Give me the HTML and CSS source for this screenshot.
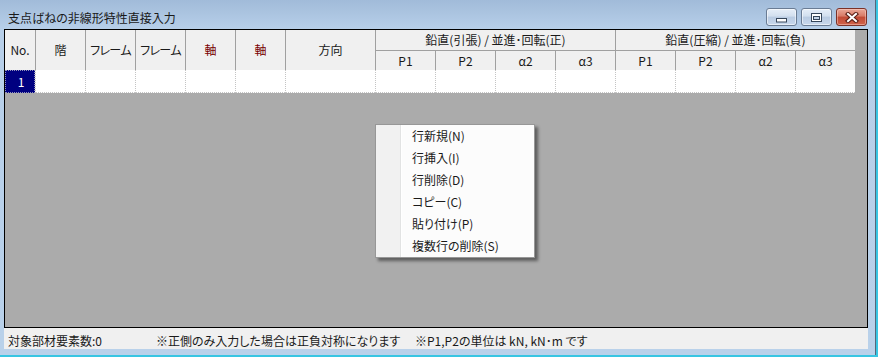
FILE: index.html
```html
<!DOCTYPE html>
<html lang="ja">
<head>
<meta charset="utf-8">
<title>支点ばねの非線形特性直接入力</title>
<link rel="stylesheet" href="styles.css">
</head>
<body>
<div class="window">
  <div class="titlebar">
    <span class="title">支点ばねの非線形特性直接入力</span>
    <div class="caption-buttons">
      <div class="cbtn"><svg width="11" height="5" viewBox="0 0 11 5"><rect x="0.5" y="0.5" width="10" height="3.5" fill="#ffffff" stroke="#36465a"/></svg></div>
      <div class="cbtn"><svg width="11" height="9" viewBox="0 0 11 9"><rect x="0.5" y="0.5" width="10" height="8" fill="#ffffff" stroke="#36465a"/><rect x="2.5" y="3.5" width="6" height="3" fill="#c3d3e7" stroke="#36465a"/></svg></div>
      <div class="cbtn close"><svg width="14" height="11" viewBox="0 0 14 11"><path d="M3 2 L11 9 M11 2 L3 9" stroke="#5b1f16" stroke-width="4.2" stroke-linecap="square" fill="none"/><path d="M3 2 L11 9 M11 2 L3 9" stroke="#ffffff" stroke-width="2" stroke-linecap="square" fill="none"/></svg></div>
    </div>
  </div>
  <div class="client">
    <div class="gridview">
      <div class="sheet">
        <div class="hc span2 first">No.</div>
        <div class="hc span2">階</div>
        <div class="hc span2 narrow">フレーム</div>
        <div class="hc span2 narrow">フレーム</div>
        <div class="hc span2 axis">軸</div>
        <div class="hc span2 axis">軸</div>
        <div class="hc span2">方向</div>
        <div class="hc group">鉛直(引張) / 並進･回転(正)</div>
        <div class="hc group">鉛直(圧縮) / 並進･回転(負)</div>
        <div class="hc sub">P1</div>
        <div class="hc sub">P2</div>
        <div class="hc sub">α2</div>
        <div class="hc sub">α3</div>
        <div class="hc sub">P1</div>
        <div class="hc sub">P2</div>
        <div class="hc sub">α2</div>
        <div class="hc sub">α3</div>
        <div class="dc first selected">1</div>
        <div class="dc"></div>
        <div class="dc"></div>
        <div class="dc"></div>
        <div class="dc"></div>
        <div class="dc"></div>
        <div class="dc"></div>
        <div class="dc"></div>
        <div class="dc"></div>
        <div class="dc"></div>
        <div class="dc"></div>
        <div class="dc"></div>
        <div class="dc"></div>
        <div class="dc"></div>
        <div class="dc"></div>
      </div>
    </div>
    <div class="statusbar">
      <span class="st1">対象部材要素数:0</span>
      <span class="st2">※正側のみ入力した場合は正負対称になります</span>
      <span class="st3">※P1,P2の単位は kN, kN･m です</span>
    </div>
  </div>
  <div class="menu">
    <div class="item">行新規(N)</div>
    <div class="item">行挿入(I)</div>
    <div class="item">行削除(D)</div>
    <div class="item">コピー(C)</div>
    <div class="item">貼り付け(P)</div>
    <div class="item">複数行の削除(S)</div>
  </div>
</div>
</body>
</html>
```
FILE: styles.css
```css
* { box-sizing: border-box; }
html, body {
  margin: 0;
  padding: 0;
}
body {
  width: 878px;
  height: 357px;
  background: #38c5e2;
  font-family: "Noto Sans CJK JP", "Noto Sans", sans-serif;
  font-feature-settings: "palt";
  font-size: 12px;
  color: #1a1a1a;
  overflow: hidden;
}
.window {
  position: relative;
  width: 876px;
  height: 355px;
  border-right: 1px solid #56677a;
  background: linear-gradient(to bottom, #a1bbd9 0px, #b7cfe9 29px, #b9d1ea 100%);
  display: flex;
  flex-direction: column;
}
.titlebar {
  height: 29px;
  display: flex;
  justify-content: space-between;
  align-items: flex-start;
}
.title {
  padding: 10px 0 0 8px;
  line-height: 16px;
  font-size: 12px;
  color: #1a1a1a;
}
.caption-buttons {
  display: flex;
  gap: 4px;
  margin: 8px 8px 0 0;
}
.cbtn {
  width: 31px;
  height: 18px;
  border: 1px solid #6a7c94;
  border-radius: 3px;
  background: linear-gradient(to bottom, #e6eef8 0%, #d2dfee 45%, #b9cbe2 50%, #c8d8ec 100%);
  box-shadow: inset 0 0 0 1px rgba(255,255,255,0.55);
  display: flex;
  align-items: center;
  justify-content: center;
}
.cbtn svg { display: block; }
.cbtn:first-child svg { margin-top: 6px; }
.cbtn.close {
  border-color: #7b3228;
  background: linear-gradient(to bottom, #e9a898 0%, #d77a66 45%, #c14a35 50%, #cf634b 100%);
  box-shadow: inset 0 0 0 1px rgba(255,220,210,0.45);
}
.client {
  margin-left: 4px;
  width: 864px;
  height: 320px;
  display: flex;
  flex-direction: column;
}
.gridview {
  height: 299px;
  border: 1px solid #000;
  background: #ababab;
}
.sheet {
  width: 850px;
  display: grid;
  grid-template-columns: 30px 50px 50px 50px 50px 50px 90px repeat(8, 60px);
  grid-template-rows: 20px 20px 23px;
}
.hc {
  background: #f0f0f0;
  border-left: 1px solid #a0a0a0;
  display: flex;
  align-items: center;
  justify-content: center;
  white-space: nowrap;
  overflow: hidden;
  font-size: 12px;
  line-height: 14px;
}
.hc.first { border-left: none; }
.hc.span2 { grid-row: span 2; }
.hc.group { grid-column: span 4; }
.hc.sub { border-top: 1px solid #a0a0a0; }
.hc.narrow { letter-spacing: -0.6px; }
.hc.axis { color: #780000; }
.dc {
  background: #fff;
  border-left: 1px dotted #c4c4c4;
  border-bottom: 1px dotted #c4c4c4;
}
.dc.first { border-left: none; }
.dc.selected {
  background: #000080;
  color: #fff;
  display: flex;
  align-items: center;
  justify-content: center;
  padding-left: 2px;
  font-size: 12px;
  border-bottom: 1px dotted #a0a0c8;
  outline: 1px dotted #9090b8;
  outline-offset: -1px;
}
.statusbar {
  height: 21px;
  background: #f0f0f0;
  display: flex;
  padding: 5px 0 0 4px;
  line-height: 16px;
  font-size: 12px;
  white-space: nowrap;
}
.st1 { width: 148px; }
.st2 { width: 259px; }
.menu {
  position: absolute;
  left: 375px;
  top: 124px;
  width: 160px;
  height: 134px;
  border: 1px solid #979797;
  background: linear-gradient(to right, #f1f1f1 0px, #f1f1f1 24px, #e2e3e3 24px, #e2e3e3 25px, #ffffff 25px, #ffffff 26px, #fcfcfc 26px);
  box-shadow: 3px 3px 3px rgba(0,0,0,0.45);
}
.item {
  height: 22px;
  line-height: 22px;
  padding-left: 36px;
  font-size: 12px;
  white-space: nowrap;
}
```
